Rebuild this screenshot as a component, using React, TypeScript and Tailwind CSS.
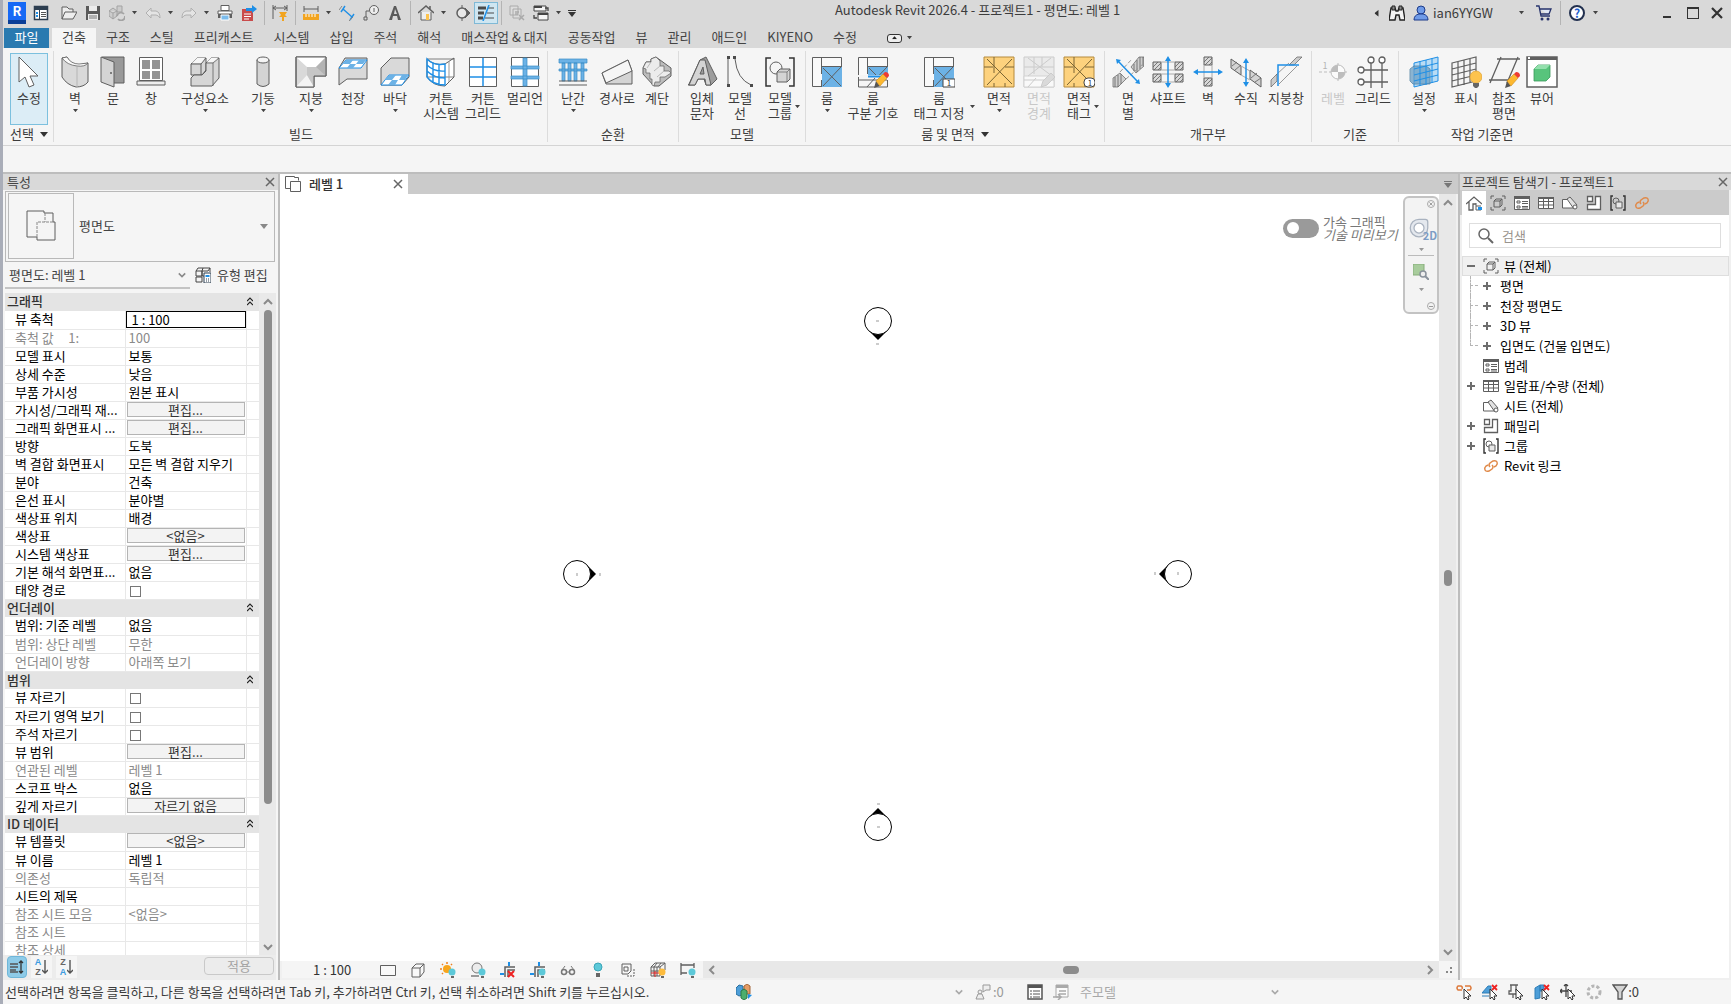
import { useState } from 'react';
import type { ReactNode } from 'react';
import clsx from 'clsx';

const INK = '#5f5f5f';
const BLUE = '#1e8fe6';
const SKY = '#6cb2e6';

// 32px ribbon artwork
const ribbonIcons: Record<string, ReactNode> = {
  modify: (
    <path d="M6 1v25l6-5 4 10 5-2-4-9h8z" fill="#fff" stroke={INK} />
  ),
  wall: (
    <>
      <path d="M3 2v19q5 8 14 10 8 0 12-5V7l-9 2Q11 8 8 1z" fill="#d9d9d9" stroke={INK} />
      <path d="M3 2l5-1q4 7 12 7l9-1q-3 4-11 3Q8 9 3 2z" fill="#fafafa" stroke={INK} strokeWidth=".8" />
      <path d="M18 11v20" stroke="#b5b5b5" />
    </>
  ),
  door: (
    <>
      <path d="M5 1h22v26H15" fill="#999" stroke={INK} />
      <path d="M4 1l13 5v25L4 26z" fill="#d4d4d4" stroke={INK} />
      <circle cx="14" cy="17" r="1" fill={INK} />
    </>
  ),
  window: (
    <>
      <path d="M4.500 1.500h23v23h-23z" fill="#fff" stroke={INK} />
      <path d="M7 4h8v9H7zM17 4h8v9h-8zM7 15h8v8H7zM17 15h8v8h-8z" fill="#949494" />
      <path d="M2 25h28v4H2z" fill="#eee" stroke={INK} />
    </>
  ),
  component: (
    <>
      <path d="M2 8l6-6h9v12l-4 5H2z" fill="#d6d6d6" stroke={INK} />
      <path d="M2 8h10v11M12 8l5-6" fill="none" stroke={INK} />
      <path d="M3 7l5-5h8l-4 5z" fill="#f7f7f7" />
      <path d="M17 7l5-5h8v20l-7 8H2v-8l3-3h8l4-4z" fill="#d6d6d6" stroke={INK} />
      <path d="M17 7h7v23M24 7l6-5" fill="none" stroke={INK} strokeWidth=".8" />
      <path d="M18 6l4-4h7l-5 4z" fill="#f7f7f7" />
    </>
  ),
  column: (
    <>
      <path d="M10 4v24q6 5 12 0V4z" fill="#d4d4d4" stroke={INK} />
      <ellipse cx="16" cy="4" rx="6" ry="3" fill="#f5f5f5" stroke={INK} />
    </>
  ),
  roof: (
    <>
      <path d="M1 1h30v19H19v11H1z" fill="#d9d9d9" stroke={INK} />
      <path d="M1 1h30L21 11l-9 0z" fill="#fff" />
      <path d="M12 11h9l10-10v19z" fill="#b3b3b3" />
      <path d="M1 31l11-12 7 12z" fill="#f4f4f4" />
      <path d="M12 11v8l7 12V20l12 0-10-9z" fill="#c6c6c6" />
      <path d="M1 1h30v19H19v11H1z" fill="none" stroke={INK} />
    </>
  ),
  ceiling: (
    <>
      <path d="M2 12V29l8-6v0h20V2H8z" fill="#d9d9d9" stroke={INK} />
      <path d="M2 12l7-8h21l-6 8z" fill="#fff" stroke={BLUE} />
      <path d="M9 4h7l-3 4H6zM22 4h7l-3 4h-7zM13 8h6l-3 4h-6z" fill={SKY} />
    </>
  ),
  floor: (
    <>
      <path d="M2 12L12 2h18v19l-7 8H2z" fill="#d9d9d9" stroke={INK} />
      <path d="M2 29l8-10h20l-7 10z" fill="#fff" stroke={BLUE} />
      <path d="M10 19h7l-4 5H6zM23 19h6l-3 5h-6zM13 24h6l-3 5H9z" fill={SKY} />
    </>
  ),
  curtainSystem: (
    <>
      <path d="M2 3q7 7 18 5l9-6v19l-9 9Q8 30 2 21z" fill="#fff" stroke={INK} />
      <path d="M2 3h27M2 21h27" stroke={INK} strokeWidth=".8" />
      <path d="M2 3q7 7 18 5v21Q8 29 2 21zM2 9q7 7 18 6M2 15q7 7 18 7M8 7v20M14 8v21" fill="none" stroke={BLUE} strokeWidth="1.400" />
      <path d="M24 5v21" stroke="#999" />
    </>
  ),
  curtainGrid: (
    <>
      <path d="M2.500 1.500h27v29h-27z" fill="#fff" stroke={INK} />
      <path d="M16 2v28M3 11h26M3 21h26" stroke={BLUE} strokeWidth="1.500" />
    </>
  ),
  mullion: (
    <>
      <path d="M2.500 1.500h27v29h-27z" fill="#fff" stroke={INK} />
      <path d="M2 10h28v3H2zM2 20h28v3H2zM14 2h4v28h-4z" fill={SKY} stroke="#3b8cc6" strokeWidth=".7" />
    </>
  ),
  railing: (
    <>
      <path d="M2 3h28v4H2zM2 13h28v2H2zM5 7h3v18H5zM11 7h3v18h-3zM17 7h3v18h-3zM24 7h3v18h-3z" fill={SKY} stroke="#3b8cc6" strokeWidth=".7" />
      <path d="M2 25h28M2 29h28" stroke={INK} />
    </>
  ),
  ramp: (
    <>
      <path d="M1 17L27 4l4 11v13H5z" fill="#d4d4d4" stroke={INK} />
      <path d="M1 17L27 4l4 11L5 27z" fill="#f6f6f6" stroke={INK} />
    </>
  ),
  stair: (
    <>
      <path d="M2 12l3-6h5V3l5-2 15 11v8L18 30h-5L2 18z" fill="#bcbcbc" stroke={INK} />
      <path d="M2 12l3-6h5V3l5-2 4 4v5h4v5h5l2 2-6 4h-5v5h-5l-1 4-2-1v-6H9v-6H5v-4z" fill="#ececec" stroke={INK} strokeWidth=".7" />
      <path d="M10 6l-4 6M19 10l-6 5M23 15l-7 6" stroke="#aaa" strokeWidth=".8" />
    </>
  ),
  modelText: (
    <>
      <path d="M3 28L14 4l6-3 11 22-6 6-5 0-2-6h-6l-3 6H2z" fill="#9d9d9d" stroke={INK} />
      <path d="M3 29L14 4h5l6 25h-5l-1-6h-7l-3 6zM14 18h4l-1-7z" fill="#d4d4d4" stroke={INK} fillRule="evenodd" />
    </>
  ),
  modelLine: (
    <>
      <path d="M4 3v26M11 3q2 20 16 26" fill="none" stroke={INK} />
      <path d="M3 0h3v3H3zM3 28h3v3H3zM9 0h3v3H9zM26 28h3v3h-3z" fill="#4b4b4b" />
    </>
  ),
  modelGroup: (
    <>
      <path d="M7 2H2v28h5M25 2h5v28h-5" fill="none" stroke="#333" strokeWidth="1.500" />
      <circle cx="12" cy="12" r="6" fill="#f5f5f5" stroke={INK} />
      <path d="M13 16l3-3h10v10l-3 3H13z" fill="#d4d4d4" stroke={INK} />
      <path d="M13 16h10v10M23 16l3-3" fill="none" stroke={INK} strokeWidth=".7" />
    </>
  ),
  room: <RoomBase />,
  roomSeparator: (
    <>
      <RoomBase />
      <path d="M0 19h32v12H0z" fill="#f5f5f5" />
      <path d="M1.500 21v10h29v-7M1 24h29M10 31l8-9" fill="none" stroke={INK} />
      <path d="M11 20.500h20" stroke={BLUE} strokeWidth="2" />
      <Pencil />
    </>
  ),
  roomTag: (
    <>
      <RoomBase />
      <path d="M20 23h12v8H20z" fill="#fff" stroke="#444" />
      <text x="26" y="30" textAnchor="middle" fontSize="8" fill="#333">1</text>
    </>
  ),
  area: <AreaBase />,
  areaBoundary: (
    <g opacity=".45">
      <path d="M1 1h30v30H1z" fill="#ddd" stroke="#999" />
      <path d="M1 20h30v11H1z" fill="#fff" stroke="#aaa" />
      <path d="M11 1v17M19 1v10M1 11h30M5 2l24 18M28 2L5 20M5 31l8-9M1 24h30" fill="none" stroke="#999" />
      <path d="M18 31l2-6 8-8 4 4-8 8z" fill="#bbb" stroke="#999" />
    </g>
  ),
  areaTag: (
    <>
      <AreaBase />
      <rect x="21" y="22" width="11" height="9" rx="4" fill="#fff" stroke="#444" />
      <text x="27" y="30" textAnchor="middle" fontSize="8" fill="#333">1</text>
    </>
  ),
  byFace: (
    <>
      <path d="M1 31V22l7-5 6 6-8 8zM19 11l8-10h5v9l-8 7z" fill="#cfcfcf" stroke={INK} strokeWidth=".7" />
      <path d="M3 21v10M6 19v12M9 18v10M22 8v7M25 4v12M28 1v12M31 1v9" stroke={INK} strokeWidth=".8" />
      <path d="M8 16L20 3M14 23L31 8" stroke="#999" strokeDasharray="4 2" />
      <path d="M6 5l20 21" stroke={BLUE} strokeWidth="1.500" />
      <path d="M4 3l5 1-4 4zM28 28l-5-1 4-4z" fill={BLUE} />
    </>
  ),
  shaft: (
    <>
      <HatchBox x={1} y={6} /><HatchBox x={23} y={6} /><HatchBox x={1} y={18} /><HatchBox x={23} y={18} />
      <path d="M9 6h14M9 14h14M9 18h14M9 26h14" stroke="#aaa" />
      <path d="M16 2v28" stroke={BLUE} strokeWidth="1.500" />
      <path d="M13 5l3-5 3 5zM13 27l3 5 3-5z" fill={BLUE} />
    </>
  ),
  wallOpening: (
    <>
      <HatchBox x={12} y={1} /><HatchBox x={12} y={22} />
      <path d="M12 9v13M20 9v13" stroke="#aaa" />
      <path d="M4 16h24" stroke={BLUE} strokeWidth="1.500" />
      <path d="M6 13l-5 3 5 3zM26 13l5 3-5 3z" fill={BLUE} />
    </>
  ),
  vertical: (
    <>
      <path d="M1 3l10 7v9L1 12zM20 14l11 8v9l-11-8z" fill="#d4d4d4" stroke={INK} />
      <path d="M2 10l5-4M5 14l6-5M21 22l6-5M25 26l6-4" stroke={INK} strokeWidth=".8" />
      <path d="M11 10l9 5M11 19l9 5" stroke="#aaa" />
      <path d="M16 5v24" stroke={BLUE} strokeWidth="1.500" />
      <path d="M13 7l3-5 3 5zM13 26l3 5 3-5z" fill={BLUE} />
    </>
  ),
  dormer: (
    <>
      <path d="M1 31v-7l6-6v7zM19 9l8-8h5l-8 8z" fill="#ccc" stroke={INK} strokeWidth=".7" />
      <path d="M9 28L27 10M7 18L19 7" stroke="#999" />
      <path d="M8 30V9h21" fill="none" stroke={BLUE} strokeWidth="1.500" />
    </>
  ),
  level: (
    <g opacity=".6">
      <path d="M2 16h28M21 7v19" stroke="#999" strokeDasharray="3 2" />
      <circle cx="21" cy="16" r="7" fill="#fff" stroke="#999" />
      <path d="M21 9v7h-7a7 7 0 0 1 7-7zM21 23v-7h7a7 7 0 0 1-7 7z" fill="#999" />
      <text x="8" y="13" textAnchor="middle" fontSize="9" fill="#888">1</text>
    </g>
  ),
  grid: (
    <>
      <path d="M14 7v25M25 7v25M7 14h24M7 26h24" stroke={INK} strokeWidth="1.300" />
      <g fill="#fff" stroke={INK} strokeWidth="1.300">
        <circle cx="14" cy="4" r="3" /><circle cx="25" cy="4" r="3" />
        <circle cx="4" cy="14" r="3" /><circle cx="4" cy="26" r="3" />
      </g>
    </>
  ),
  setPlane: (
    <>
      <path d="M6 7l24-6v24L6 31z" fill="#b9dcf5" stroke={BLUE} />
      <path d="M2 13l4-3h12l4 3v15H5l-3-3z" fill="#6a9fc6" stroke="#467a9f" opacity=".75" />
      <path d="M12 5v25M18 4v25M24 2v25M6 13l24-6M6 19l24-6M6 25l24-6" stroke={BLUE} />
    </>
  ),
  showPlane: (
    <>
      <path d="M2 7l24-6v24L2 31zM8 5v25M14 4v25M20 2v25M2 13l24-6M2 19l24-6M2 25l24-6" fill="none" stroke={INK} strokeWidth="1.200" />
      <circle cx="26" cy="21" r="6" fill="#fdc34d" stroke="#e0a030" strokeWidth=".7" />
      <path d="M23 27h6v3l-2 2h-2l-2-2z" fill="#666" />
    </>
  ),
  refPlane: (
    <>
      <path d="M13 1L2 27M30 1L19 27M9 3h24M1 24h22" stroke={INK} strokeWidth="1.300" />
      <Pencil />
    </>
  ),
  viewer: (
    <>
      <path d="M1 1h30v30H1z" fill="#fff" stroke={INK} strokeWidth="1.500" />
      <path d="M1 1h30v3H1z" fill={INK} />
      <path d="M2 1h2v2H2z" fill="#fff" />
      <path d="M8 13l4-4h12v12l-4 4H8z" fill="#58c47c" stroke="#3a9a5a" strokeWidth=".8" />
      <path d="M8 13l4-4h12l-4 4z" fill="#93e0ad" />
    </>
  ),
};

function RoomBase() {
  return (
    <>
      <path d="M1.500 1.500h29v29h-29z" fill="#f9f9f9" stroke={INK} />
      <path d="M11 10h20v21H11z" fill={SKY} />
      <path d="M10.500 2v16M10.500 24v6M11 10.500h20M12 12l18 18M30 11L12 30" fill="none" stroke={INK} />
    </>
  );
}

function AreaBase() {
  return (
    <>
      <path d="M1 1h30v30H1z" fill="#fdd27e" stroke="#b58a3c" />
      <path d="M11 1v16M22 27v4M1 11h9M22 11h9M11 27v4M4 3l25 25M29 3L4 29" fill="none" stroke="#7a6534" />
    </>
  );
}

function Pencil() {
  return (
    <>
      <path d="M17 32l2-7 4 5z" fill="#555" />
      <path d="M19 25l7-7 4 4-7 8z" fill="#fdb82f" stroke="#c98b1d" strokeWidth=".6" />
      <path d="M26 18l2-2q4 0 4 4l-2 2z" fill="#ee3b33" />
    </>
  );
}

function HatchBox({ x, y }: { x: number; y: number }) {
  return (
    <g transform={`translate(${x} ${y})`}>
      <path d="M0 0h8v8H0z" fill="#d9d9d9" stroke={INK} />
      <path d="M0 5l5-5M1 8l7-7M5 8l3-3" stroke={INK} strokeWidth=".8" />
    </g>
  );
}

// 16px artwork shared by the bars, the status line and the browser tree
const icons: Record<string, ReactNode> = {
  recent: <><path d="M1.500 1.500h13v13h-13z" fill="#fff" stroke="#2d3e50" strokeWidth="1.500" /><path d="M1 1h14v4H1z" fill="#2d3e50" /><path d="M3 7h2v2H3zM3 10h2v2H3z" fill={BLUE} /><path d="M6.500 5v10" stroke="#2d3e50" /><path d="M8 7.500h5M8 9.500h5M8 11.500h5" stroke="#555" /></>,
  open: <path d="M1 14V2h5l2 2h4v3M1 14L4 7h12l-4 7z" fill="#eee" stroke={INK} />,
  save: <><path d="M1 1h14v14H1z" fill="#5a5a5a" /><path d="M4 1h8v5H4zM3 9h10v6H3z" fill="#ececec" /><path d="M4 11h8M4 13h8" stroke="#777" /></>,
  sync: <g fill="#ccc" stroke="#a3a3a3"><path d="M0 6l4-3 4 3v5l-4 3-4-3zM8 1h5v6H8zM0 6l4 2 4-2M4 8v6" /><path d="M8 11a4 4 0 0 1 7-2M16 11a4 4 0 0 1-7 3" fill="none" strokeWidth="1.800" /></g>,
  undo: <path d="M1 8l5-5v3h5q4 1 4 7-2-3-4-3H6v3z" fill="#e4e4e4" stroke="#b0b0b0" />,
  redo: <path d="M15 8l-5-5v3H5Q1 7 1 13q2-3 4-3h5v3z" fill="#e4e4e4" stroke="#b0b0b0" />,
  print: <><path d="M4 .500h8v5H4z" fill="#fff" stroke={INK} /><path d="M1 6h14v3H1z" fill="#fff" stroke={INK} /><path d="M1 9h14v4H1z" fill="#5f5f5f" /><path d="M4 10h8v5H4z" fill="#7cbcec" stroke="#fff" /></>,
  exportPdf: <><path d="M1 4h11v12H1z" fill="#c94b4b" /><path d="M3 9h7M3 11.500h7M3 14h5" stroke="#fff" /><path d="M5 5V3h6V0l5 4-5 4V6H5z" fill={BLUE} /></>,
  dimPin: <><path d="M1 0v14M15 0v6M1 3h14M4 1L1 3l3 2M12 1l3 2-3 2" fill="none" stroke={INK} /><path d="M7 7h8l-2 3 2 2h-3v4h-2v-4H7l2-2z" fill="#f2a41f" /></>,
  measure: <><path d="M1 1v6M15 1v6M1 4h14" stroke={INK} /><path d="M0 9h16v6H0z" fill="#f2a41f" /><path d="M3 9v3M6 9v3M9 9v3M12 9v3" stroke="#fff" /></>,
  aligned: <><path d="M4 4l9 8M2 7l4-6M11 15l4-6" stroke={BLUE} strokeWidth="1.400" /><path d="M0 5l3-4M10 16l4-4" stroke="#888" /></>,
  tag: <><circle cx="11" cy="5" r="4.500" fill="#eee" stroke={INK} /><path d="M6 6H3v6M1 12h3v3H1z" fill="none" stroke={INK} /><path d="M11 3v4" stroke={INK} /></>,
  textA: <path d="M2 15L7 1h2l5 14h-3l-1-4H6l-1 4zM7 9h3L8 4z" fill="#5a5a5a" fillRule="evenodd" />,
  house: <><path d="M3 7v8h10V7" fill="#eee" stroke={INK} /><path d="M0 8l8-7 8 7M12 1v4" fill="none" stroke={INK} strokeWidth="1.500" /><path d="M8 9h3v6H8z" fill="#fdc34d" /></>,
  section: <><path d="M8 0v16M11 3l5 5-5 5z" fill={INK} stroke={INK} /><circle cx="8" cy="8" r="5" fill="#e8e8e8" stroke={INK} strokeWidth="1.500" /></>,
  thinLines: <><path d="M0 3h8M0 8h6M0 13h5" stroke="#4a4a4a" strokeWidth="3" /><path d="M10 3h6M9 8h7M7 13h9" stroke="#4a4a4a" /><path d="M11 0L5 16" stroke={BLUE} strokeWidth="1.500" /></>,
  closeHidden: <g fill="#ddd" stroke="#aaa"><path d="M1 1h8v9H1zM4 4h8v9H4z" /><path d="M6 7h4M6 9h3M10 10l5 5M15 10l-5 5" strokeWidth="1.500" /></g>,
  windows: <><path d="M6 1h7v5H1V1h5M5 8h10v7H5z" fill="#f5f5f5" stroke="#444" /><path d="M1 2h8M5 9h10" stroke="#444" strokeWidth="2" /><path d="M12 3h3v3M1 10v3h3" fill="none" stroke="#444" strokeWidth="1.300" /></>,
  binoculars: <><path d="M2 3h4l1 3h2l1-3h4l2 12h-5l-1-5H7l-1 5H0z" fill="#f4f4f4" stroke="#222" strokeWidth="1.400" /><path d="M3 1h3v4H3zM10 1h3v4h-3z" fill="#888" stroke="#222" /></>,
  user: <><circle cx="8" cy="5" r="4" fill="#6f9be8" stroke="#1d3b8a" /><path d="M1 15q0-5 5-6h4q5 1 5 6z" fill="#6f9be8" stroke="#1d3b8a" /></>,
  cart: <><path d="M0 1h3l2 10h9M4 4h11l-2 5H5" fill="#dfe6f5" stroke="#27336b" strokeWidth="1.300" /><circle cx="6" cy="14" r="1.500" fill="#27336b" /><circle cx="12" cy="14" r="1.500" fill="#27336b" /></>,
  rect: <path d="M.5 3.500h15v10H.5z" fill="#f8f8f8" stroke={INK} />,
  cube: <path d="M2 6l4-4h8v8l-4 5H2zM2 6h8v9M10 6l4-4" fill="#f8f8f8" stroke={INK} />,
  sun: <><circle cx="7" cy="7" r="4" fill="#f7a51c" /><path d="M7 0v2M0 7h2M2 2l1 1M12 2l-1 1M2 12l1-1" stroke="#f07f1c" strokeWidth="1.500" /><Bulb /></>,
  ball: <><circle cx="7" cy="6" r="5" fill="#ececec" stroke="#777" /><path d="M1 14h8" stroke="#999" strokeWidth="2" /><Bulb /></>,
  cropX: <><path d="M5 15V5h10M8 15V8h7" fill="none" stroke={INK} strokeWidth="1.500" /><path d="M9 0v4M0 12h4" stroke={BLUE} strokeWidth="2" /><path d="M8 9l6 6M14 9l-6 6" stroke="#e22" strokeWidth="2" /></>,
  cropShow: <><path d="M5 15V5h10M8 15V8h7" fill="none" stroke={INK} strokeWidth="1.500" /><path d="M9 0v4M0 12h4" stroke={BLUE} strokeWidth="2" /><Bulb /></>,
  glasses: <><circle cx="4" cy="10" r="2.500" fill="none" stroke="#777" strokeWidth="1.500" /><circle cx="12" cy="10" r="2.500" fill="none" stroke="#777" strokeWidth="1.500" /><path d="M2 8l3-4M14 8l-3-4M7 10h2" stroke="#777" /></>,
  bulb: <><circle cx="8" cy="5" r="4" fill="#5cc8d8" stroke="#3aa5b8" /><path d="M6 11h4v4H6z" fill="#666" /></>,
  displace: <><path d="M2 2h9v7L8 12H2zM4 5h4v4H4z" fill="none" stroke={INK} /><path d="M7 14h7V6" fill="none" stroke={INK} strokeDasharray="2 1" /></>,
  analytic: <><path d="M1 5l4-4h10v7M1 5h9v9H1zM4 5v9M7 5v9M1 9h9M10 5l5-4M7 1L4 5M11 1L8 5" fill="none" stroke={INK} /><path d="M1 11h9M5 9v6" stroke="#d22" /><Bulb fill="#fdbb3c" /></>,
  constraints: <><path d="M1 1v12M14 1v5M1 3h13M1 11h6" fill="none" stroke={INK} strokeWidth="1.300" /><Bulb /></>,
  worksets: <><path d="M0 4l3-3 4 1v9l-4 1-3-2z" fill="#4d9ed8" stroke="#2b6f9f" /><path d="M8 2l3-2 3 2v8H8z" fill="#e59c66" stroke="#a4673a" /><path d="M5 7l3-2 3 2v7l-3 2-3-2z" fill="#4cae6c" stroke="#2a7a45" /><path d="M12 10l4 1-4 4z" fill={BLUE} /></>,
  editable: <g fill="#eee" stroke="#999"><circle cx="5" cy="8" r="2" /><path d="M3 10h4l2 5H1zM8 1h7v5h-4l-3 2z" /></g>,
  list: <><path d="M1 1h14v14H1z" fill="#fff" stroke="#555" strokeWidth="1.500" /><path d="M1 1h14v3H1z" fill="#555" /><path d="M3 7h2M6 7h7M3 10h2M6 10h7M3 13h2M6 13h7" stroke="#555" /></>,
  listOut: <g opacity=".6"><path d="M3 1h12v12H3z" fill="#fff" stroke="#777" /><path d="M3 1h12v3H3z" fill="#777" /><path d="M6 7h7M6 10h7M0 13h7M5 10l3 3-3 3" stroke="#777" fill="none" strokeWidth="1.500" /></g>,
  pickLink: <><path d="M6 6H2q-2-2 0-4h3q2 1 1 3M9 2h5q2 2 0 4h-3" fill="none" stroke="#dd7a3c" strokeWidth="1.500" /><Arrow /></>,
  pickUnderlay: <><path d="M0 9l6-7h3v7zM0 12h7" fill="#4d9ed8" stroke="#2f7fb8" /><path d="M10 1l5 5M15 1l-5 5" stroke="#e22" strokeWidth="1.800" /><Arrow /></>,
  pickPin: <><path d="M2 1h8M3 1v6H1v3h8V7H8V1M5 10v4" fill="none" stroke={INK} strokeWidth="1.300" /><Arrow /></>,
  pickFace: <><path d="M1 4l5-3v13l-5 1zM6 1h4v6H6z" fill="#4d9ed8" stroke="#2f7fb8" /><path d="M10 1l5 5M15 1l-5 5" stroke="#e22" strokeWidth="1.800" /><Arrow /></>,
  pickDrag: <><path d="M0 7h12M6 0v13M2 5L0 7l2 2M4 2l2-2 2 2" fill="none" stroke="#444" strokeWidth="1.300" /><Arrow /></>,
  progress: <circle cx="8" cy="8" r="6" fill="none" stroke="#b5b5b5" strokeWidth="3" strokeDasharray="3 2" />,
  filter: <path d="M1 1h14l-5 7v7H6V8z" fill="#d4d4d4" stroke="#555" strokeWidth="1.300" />,
  homeTree: <><path d="M0 9l8-7 8 7M3 7v8h4V9h3" fill="none" stroke={INK} strokeWidth="1.300" /><path d="M10 8v7h5M10 11h5" stroke={INK} fill="none" /><path d="M12 12h4v3h-4z" fill={BLUE} /></>,
  view: <><path d="M4 1H1v3M12 1h3v3M4 15H1v-3M12 15h3v-3M4 6l2-2h6v6l-2 2H4zM4 6h6v6M10 6l2-2" fill="none" stroke={INK} /></>,
  legend: <><path d="M.5 1.500h15v13H.5z" fill="#fff" stroke={INK} /><path d="M0 1h16v3H0z" fill={INK} /><path d="M3 6h3v2H3zM3 11h3v2H3z" fill="none" stroke={INK} /><path d="M8 6.500h6M8 8.500h6M8 11.500h6M8 13h6" stroke={INK} /></>,
  schedule: <><path d="M.5 2.500h15v11H.5zM.5 6.500h15M.5 10h15M5.500 3v11M10.500 3v11" fill="#fff" stroke={INK} /><path d="M0 2h16v2H0z" fill={INK} /></>,
  sheet: <><path d="M.5 13V4.500h6l8 8V13z" fill="#fff" stroke={INK} /><path d="M5 4l3-2 7 8-3 4z" fill="#e2e2e2" stroke={INK} /><circle cx="13" cy="12" r="2" fill="#fff" stroke={INK} /></>,
  family: <path d="M1.500 1.500h5v5h-5zM9.500 1.500h5v13h-13v-5h8z" fill="#fff" stroke={INK} strokeWidth="1.300" />,
  plan: <><path d="M5 12.500H.5v-12h9v1h4v3" fill="#fff" stroke={INK} /><path d="M5.500 15.500v-10h10v10z" fill="#fff" stroke={INK} /></>,
  group: <><path d="M3 1H1v14h2M13 1h2v14h-2" fill="none" stroke="#333" strokeWidth="1.400" /><circle cx="6" cy="6" r="3" fill="none" stroke={INK} /><path d="M6 7h6v6H6z" fill="#e8e8e8" stroke={INK} /></>,
  link: <g fill="none" stroke="#e08a4a" strokeWidth="1.500"><path d="M7 9q-2-2 0-4l3-2q3-1 4 1 1 2-1 4l-2 1" /><path d="M9 7q2 2 0 4l-3 2q-3 1-4-1-1-2 1-4l2-1" /></g>,
  search: <><circle cx="6" cy="6" r="5" fill="none" stroke="#666" strokeWidth="1.500" /><path d="M10 10l5 5" stroke="#666" strokeWidth="2" /></>,
  typeEdit: <><path d="M1 4l2-3h12v4M1 4h6v5H1zM1 10h6v5H1zM8 1L7 4v5h3M7 4h6l2-3" fill="none" stroke="#444" /><path d="M9 6h7v10H9z" fill="#fff" stroke="#2d3e50" /><path d="M10.500 8h4v2h-4z" fill={BLUE} /><path d="M11 12h1M13 12h1M11 14h1M13 14h1" stroke="#2d3e50" /></>,
  sortGroup: <><path d="M1 5h8M1 8h8M1 11h6M1 13h8" stroke="#555" strokeWidth="1.300" /><path d="M12 2v12M10 4l2-2 2 2M10 12l2 2 2-2" stroke="#333" fill="none" strokeWidth="1.300" /></>,
  wheel: <><path d="M8 1h5q2 0 2 2v5a7 7 0 1 1-7-7z" fill="#e4e8ee" stroke="#a9b2bf" /><circle cx="8" cy="8" r="4" fill="#fff" stroke="#a9b2bf" /></>,
  zoomRegion: <><path d="M0 0h11v11H0z" fill="#a8cc9c" stroke="#86ad7a" /><circle cx="10" cy="10" r="3" fill="#eee" stroke="#8a929c" strokeWidth="1.500" /><path d="M12 12l4 4" stroke="#8a929c" strokeWidth="2" /></>,
};

function Bulb({ fill = '#5cc8d8' }: { fill?: string }) {
  return (
    <>
      <circle cx="12" cy="10" r="3.500" fill={fill} />
      <path d="M11 14h3v2h-3z" fill="#666" />
    </>
  );
}

function Arrow() {
  return <path d="M8 5v10l2-2 2 3 1-1-1-3h3z" fill="#fff" stroke="#333" />;
}

function Icon({ name, className = 'size-4' }: { name: string; className?: string }) {
  return (
    <svg viewBox="0 0 16 16" fill="none" className={clsx('shrink-0', className)} aria-hidden="true">
      {icons[name]}
    </svg>
  );
}

function Caret({ className = 'w-[6px] text-[#444]' }: { className?: string }) {
  return (
    <svg viewBox="0 0 8 5" className={clsx('shrink-0', className)} aria-hidden="true">
      <path d="M0 0h8L4 5z" fill="currentColor" />
    </svg>
  );
}

function Chevron({ className = 'size-[10px]' }: { className?: string }) {
  return (
    <svg viewBox="0 0 10 10" fill="none" className={clsx('shrink-0', className)} aria-hidden="true">
      <path d="M1 3l4 4 4-4" stroke="#8a8a8a" strokeWidth="2" />
    </svg>
  );
}

function CloseMark({ className = 'size-[10px]' }: { className?: string }) {
  return (
    <svg viewBox="0 0 10 10" fill="none" className={className} aria-hidden="true">
      <path d="M1 1l8 8M9 1L1 9" stroke="#666" strokeWidth="1.500" />
    </svg>
  );
}

interface RibbonTool {
  icon: string;
  lines: string[];
  width: string;
  caret?: 'below' | 'side';
  disabled?: boolean;
}

interface RibbonGroup {
  title: string;
  expandable?: boolean;
  padding: string;
  tools: RibbonTool[];
}

const ribbonGroups: RibbonGroup[] = [
  {
    title: '빌드',
    padding: 'pl-px',
    tools: [
      { icon: 'wall', lines: ['벽'], width: 'w-10', caret: 'below' },
      { icon: 'door', lines: ['문'], width: 'w-9' },
      { icon: 'window', lines: ['창'], width: 'w-10' },
      { icon: 'component', lines: ['구성요소'], width: 'w-[68px]', caret: 'below' },
      { icon: 'column', lines: ['기둥'], width: 'w-12', caret: 'below' },
      { icon: 'roof', lines: ['지붕'], width: 'w-12', caret: 'below' },
      { icon: 'ceiling', lines: ['천장'], width: 'w-9' },
      { icon: 'floor', lines: ['바닥'], width: 'w-12', caret: 'below' },
      { icon: 'curtainSystem', lines: ['커튼', '시스템'], width: 'w-11' },
      { icon: 'curtainGrid', lines: ['커튼', '그리드'], width: 'w-10' },
      { icon: 'mullion', lines: ['멀리언'], width: 'w-11' },
    ],
  },
  {
    title: '순환',
    padding: 'px-[3px]',
    tools: [
      { icon: 'railing', lines: ['난간'], width: 'w-11', caret: 'below' },
      { icon: 'ramp', lines: ['경사로'], width: 'w-11' },
      { icon: 'stair', lines: ['계단'], width: 'w-9' },
    ],
  },
  {
    title: '모델',
    padding: 'px-[3px]',
    tools: [
      { icon: 'modelText', lines: ['입체', '문자'], width: 'w-10' },
      { icon: 'modelLine', lines: ['모델', '선'], width: 'w-9' },
      { icon: 'modelGroup', lines: ['모델', '그룹'], width: 'w-11', caret: 'side' },
    ],
  },
  {
    title: '룸 및 면적',
    expandable: true,
    padding: 'px-[3px]',
    tools: [
      { icon: 'room', lines: ['룸'], width: 'w-9', caret: 'below' },
      { icon: 'roomSeparator', lines: ['룸', '구분 기호'], width: 'w-14' },
      { icon: 'roomTag', lines: ['룸', '태그 지정'], width: 'w-[76px]', caret: 'side' },
      { icon: 'area', lines: ['면적'], width: 'w-11', caret: 'below' },
      { icon: 'areaBoundary', lines: ['면적', '경계'], width: 'w-9', disabled: true },
      { icon: 'areaTag', lines: ['면적', '태그'], width: 'w-11', caret: 'side' },
    ],
  },
  {
    title: '개구부',
    padding: 'px-[3px]',
    tools: [
      { icon: 'byFace', lines: ['면', '별'], width: 'w-10' },
      { icon: 'shaft', lines: ['샤프트'], width: 'w-10' },
      { icon: 'wallOpening', lines: ['벽'], width: 'w-10' },
      { icon: 'vertical', lines: ['수직'], width: 'w-9' },
      { icon: 'dormer', lines: ['지붕창'], width: 'w-11' },
    ],
  },
  {
    title: '기준',
    padding: 'px-[3px]',
    tools: [
      { icon: 'level', lines: ['레벨'], width: 'w-9', disabled: true },
      { icon: 'grid', lines: ['그리드'], width: 'w-11' },
    ],
  },
  {
    title: '작업 기준면',
    padding: 'px-[3px]',
    tools: [
      { icon: 'setPlane', lines: ['설정'], width: 'w-11', caret: 'below' },
      { icon: 'showPlane', lines: ['표시'], width: 'w-10' },
      { icon: 'refPlane', lines: ['참조', '평면'], width: 'w-9' },
      { icon: 'viewer', lines: ['뷰어'], width: 'w-10' },
    ],
  },
];

const ribbonTabs = [
  '건축', '구조', '스틸', '프리캐스트', '시스템', '삽입', '주석', '해석',
  '매스작업 & 대지', '공동작업', '뷰', '관리', '애드인', 'KIYENO', '수정',
];

type PropertyKind = 'text' | 'input' | 'button' | 'check';

interface PropertyRow {
  name: string;
  value?: string;
  kind?: PropertyKind;
  muted?: boolean;
}

const propertySections: { title: string; rows: PropertyRow[] }[] = [
  {
    title: '그래픽',
    rows: [
      { name: '뷰 축척', value: '1 : 100', kind: 'input' },
      { name: '축척 값     1:', value: '100', muted: true },
      { name: '모델 표시', value: '보통' },
      { name: '상세 수준', value: '낮음' },
      { name: '부품 가시성', value: '원본 표시' },
      { name: '가시성/그래픽 재...', value: '편집...', kind: 'button' },
      { name: '그래픽 화면표시 ...', value: '편집...', kind: 'button' },
      { name: '방향', value: '도북' },
      { name: '벽 결합 화면표시', value: '모든 벽 결합 지우기' },
      { name: '분야', value: '건축' },
      { name: '은선 표시', value: '분야별' },
      { name: '색상표 위치', value: '배경' },
      { name: '색상표', value: '<없음>', kind: 'button' },
      { name: '시스템 색상표', value: '편집...', kind: 'button' },
      { name: '기본 해석 화면표...', value: '없음' },
      { name: '태양 경로', kind: 'check' },
    ],
  },
  {
    title: '언더레이',
    rows: [
      { name: '범위: 기준 레벨', value: '없음' },
      { name: '범위: 상단 레벨', value: '무한', muted: true },
      { name: '언더레이 방향', value: '아래쪽 보기', muted: true },
    ],
  },
  {
    title: '범위',
    rows: [
      { name: '뷰 자르기', kind: 'check' },
      { name: '자르기 영역 보기', kind: 'check' },
      { name: '주석 자르기', kind: 'check' },
      { name: '뷰 범위', value: '편집...', kind: 'button' },
      { name: '연관된 레벨', value: '레벨 1', muted: true },
      { name: '스코프 박스', value: '없음' },
      { name: '깊게 자르기', value: '자르기 없음', kind: 'button' },
    ],
  },
  {
    title: 'ID 데이터',
    rows: [
      { name: '뷰 템플릿', value: '<없음>', kind: 'button' },
      { name: '뷰 이름', value: '레벨 1' },
      { name: '의존성', value: '독립적', muted: true },
      { name: '시트의 제목' },
      { name: '참조 시트 모음', value: '<없음>', muted: true },
      { name: '참조 시트', muted: true },
      { name: '참조 상세', muted: true },
    ],
  },
];

function QuickButton({ icon, caret, active }: { icon: string; caret?: boolean; active?: boolean }) {
  return (
    <button type="button" aria-label={icon} className={clsx('flex h-[22px] items-center', active ? 'w-6 justify-center border border-[#7fb9d6] bg-[#cfe6f1]' : 'px-1')}>
      <Icon name={icon} />
      {caret && <Caret className="ml-[7px] w-[5px] text-[#444]" />}
    </button>
  );
}

function BarDivider({ className = 'mx-[3px]' }: { className?: string }) {
  return <span className={clsx('h-6 w-px bg-[#b4b4b4]', className)} />;
}

function TitleBar() {
  return (
    <header className="relative flex h-7 items-start bg-[#d9d9d9] pt-px text-[#3c3c3c]">
      <div className="flex items-center pl-[5px]">
        <button type="button" aria-label="Revit" className="mr-[3px] flex h-[22px] w-[18px] items-start justify-center border-b-4 border-[#0b3f97] bg-[#1769f5] text-[13px] leading-[17px] font-bold text-white">
          R
        </button>
        <QuickButton icon="recent" />
        <span className="w-1" />
        <QuickButton icon="open" />
        <QuickButton icon="save" />
        <QuickButton icon="sync" caret />
        <QuickButton icon="undo" caret />
        <QuickButton icon="redo" caret />
        <QuickButton icon="print" />
        <QuickButton icon="exportPdf" />
        <BarDivider />
        <QuickButton icon="dimPin" />
        <BarDivider />
        <QuickButton icon="measure" caret />
        <QuickButton icon="aligned" />
        <QuickButton icon="tag" />
        <QuickButton icon="textA" />
        <BarDivider />
        <QuickButton icon="house" caret />
        <QuickButton icon="section" />
        <QuickButton icon="thinLines" active />
        <BarDivider />
        <QuickButton icon="closeHidden" />
        <QuickButton icon="windows" caret />
        <button type="button" aria-label="신속 접근 사용자화" className="ml-[3px] flex flex-col items-center gap-px">
          <span className="h-px w-2 bg-[#333]" />
          <Caret className="w-2 text-[#333]" />
        </button>
      </div>
      <h1 className="absolute top-0 left-[832px] text-[13px] leading-5">Autodesk Revit 2026.4 - 프로젝트1 - 평면도: 레벨 1</h1>
      <div className="ml-auto flex h-6 items-center pr-2">
        <button type="button" aria-label="검색 접기" className="mr-[9px]">
          <Caret className="w-[7px] rotate-90 text-[#333]" />
        </button>
        <Icon name="binoculars" className="mr-2 size-4" />
        <button type="button" className="flex items-center text-[13px]">
          <Icon name="user" className="mr-1 size-4" />
          <span className="w-[86px] text-left">ian6YYGW</span>
          <Caret className="w-[5px] text-[#444]" />
        </button>
        <button type="button" aria-label="앱 스토어" className="ml-3">
          <Icon name="cart" />
        </button>
        <BarDivider className="mx-2" />
        <button type="button" aria-label="도움말" className="flex items-center gap-2">
          <span className="flex size-4 items-center justify-center rounded-full border-2 border-[#22304f] bg-white text-[12px] leading-3 font-bold text-[#2361d0]">?</span>
          <Caret className="w-[5px] text-[#444]" />
        </button>
        <button type="button" aria-label="최소화" className="ml-[65px] flex size-3 items-end pb-px">
          <span className="h-[2px] w-2 bg-[#333]" />
        </button>
        <button type="button" aria-label="최대화" className="ml-3 size-3 border border-t-2 border-[#333]" />
        <button type="button" aria-label="닫기" className="ml-3">
          <svg viewBox="0 0 12 12" className="size-3"><path d="M1 1l10 10M11 1L1 11" stroke="#333" strokeWidth="2.200" /></svg>
        </button>
      </div>
    </header>
  );
}

function RibbonTabs() {
  const [active, setActive] = useState('건축');
  return (
    <nav className="flex h-5 items-stretch bg-[#d9d9d9] pl-px text-[13px] leading-[18px] text-[#444]">
      <button type="button" className="mr-[3px] w-[45px] bg-[#2a7ab0] pb-[2px] text-white">파일</button>
      {ribbonTabs.map((tab) => (
        <button
          key={tab}
          type="button"
          onClick={() => setActive(tab)}
          className={clsx('px-[10px] pb-[2px] whitespace-nowrap', tab === active && 'bg-[#f5f5f5]')}
        >
          {tab}
        </button>
      ))}
      <button type="button" aria-label="리본 최소화" className="ml-5 flex items-center gap-[5px]">
        <span className="flex h-[9px] w-[15px] items-center justify-center rounded-[3px] border border-[#333] bg-[#eee]">
          <Caret className="w-[5px] rotate-180 text-[#222]" />
        </span>
        <Caret className="w-[5px] text-[#444]" />
      </button>
    </nav>
  );
}

function ToolButton({ tool }: { tool: RibbonTool }) {
  return (
    <button
      type="button"
      disabled={tool.disabled}
      className={clsx('relative flex flex-col items-center pt-2 text-[13px] leading-[15px] whitespace-nowrap', tool.width, tool.disabled && 'text-[#c8c8c8]')}
    >
      <svg viewBox="0 0 32 32" fill="none" className="mb-[2px] size-8" aria-hidden="true">
        {ribbonIcons[tool.icon]}
      </svg>
      {tool.lines.map((line) => (
        <span key={line}>{line}</span>
      ))}
      {tool.caret === 'below' && <Caret className="mt-1 w-[5px] text-[#444]" />}
      {tool.caret === 'side' && <Caret className="absolute right-[2px] bottom-3 w-[5px] text-[#444]" />}
    </button>
  );
}

function Ribbon() {
  return (
    <section className="flex h-[98px] shrink-0 border-b border-[#d4d4d4] bg-[#f5f5f5] text-[#3c3c3c]">
      <div className="my-[3px] flex w-[51px] flex-col items-center border-r border-[#dcdcdc] pl-[2px]">
        <button type="button" className="mt-[2px] flex h-[72px] w-[38px] flex-col items-center gap-[2px] border border-[#7cc0de] bg-[#dcedf6] pt-[2px] text-[13px] leading-[15px]">
          <svg viewBox="0 0 32 32" fill="none" className="size-8" aria-hidden="true">{ribbonIcons.modify}</svg>
          수정
        </button>
        <button type="button" className="mt-px flex items-center gap-[6px] text-[13px] leading-4">
          선택 <Caret className="w-2 text-[#333]" />
        </button>
      </div>
      {ribbonGroups.map((group, i) => (
        <div
          key={group.title}
          className={clsx('my-[3px] flex flex-col', group.padding, i < ribbonGroups.length - 1 && 'border-r border-[#dcdcdc]')}
        >
          <div className="-mt-[3px] flex h-[78px] items-start">
            {group.tools.map((tool) => (
              <ToolButton key={tool.icon} tool={tool} />
            ))}
          </div>
          <div className="flex items-center justify-center gap-[6px] text-[13px] leading-4">
            {group.title}
            {group.expandable && <Caret className="w-2 text-[#333]" />}
          </div>
        </div>
      ))}
    </section>
  );
}

function PropertyValue({ row }: { row: PropertyRow }) {
  if (row.kind === 'input') {
    return (
      <input
        aria-label={row.name}
        defaultValue={row.value}
        className="block h-[17px] w-full border border-black bg-white px-[5px] text-[13px] leading-4 text-black outline-none"
      />
    );
  }
  if (row.kind === 'button') {
    return (
      <button type="button" aria-label={`${row.name} ${row.value}`} className="mx-px block h-[15px] w-[118px] border border-[#b4b4b4] bg-[#f3f3f3] text-[13px] leading-[13px] text-[#333]">
        {row.value}
      </button>
    );
  }
  if (row.kind === 'check') {
    return (
      <input type="checkbox" aria-label={row.name} className="mt-1 ml-1 block size-[11px] appearance-none border border-[#777] bg-white checked:bg-[#777]" />
    );
  }
  return <span className="block pl-[3px] whitespace-nowrap">{row.value}</span>;
}

function PropertiesTable() {
  return (
    <table className="w-full table-fixed border-collapse bg-white text-left text-[13px] leading-4">
      <colgroup>
        <col className="w-[120px]" />
        <col className="w-[121px]" />
        <col />
      </colgroup>
      {propertySections.map((section) => (
        <tbody key={section.title}>
          <tr className="h-[18px] bg-[#e4e4e4]">
            <th colSpan={3} className="p-0 align-top font-medium text-[#333]">
              <button type="button" className="flex h-4 w-full items-center justify-between pr-[6px] pl-[2px]">
                {section.title}
                <svg viewBox="0 0 6 9" fill="none" className="h-[9px] w-[6px]" aria-hidden="true">
                  <path d="M0 4l3-3 3 3M0 8l3-3 3 3" stroke="#222" strokeWidth="1.200" />
                </svg>
              </button>
            </th>
          </tr>
          {section.rows.map((row) => (
            <tr key={row.name} className={clsx('h-[18px] border-b border-[#e8e8e8] align-top', row.muted ? 'text-[#8a8a8a]' : 'text-black')}>
              <th className="h-[18px] p-0 pl-[10px] font-normal whitespace-pre">{row.name}</th>
              <td className="h-[18px] border-x border-[#e8e8e8] p-0">
                <PropertyValue row={row} />
              </td>
              <td className="p-0" />
            </tr>
          ))}
        </tbody>
      ))}
    </table>
  );
}

function PropertiesPanel() {
  return (
    <aside className="flex w-[277px] shrink-0 flex-col border-r-2 border-[#bdbdbd] bg-[#f5f5f5] pr-[2px] pl-[2px]">
      <div className="-mx-[2px] flex h-4 shrink-0 items-center justify-between bg-[#d9d9d9] pr-[3px] pl-1 text-[13px] leading-4 text-[#444]">
        <h2>특성</h2>
        <button type="button" aria-label="특성 닫기"><CloseMark /></button>
      </div>
      <button type="button" className="mt-px flex h-[71px] w-[270px] shrink-0 items-center border border-[#b9b9b9] px-[2px] pb-px text-[13px] text-[#444]">
        <span className="mr-[5px] flex size-[66px] shrink-0 items-center justify-center border border-[#b9b9b9]">
          <svg viewBox="0 0 32 32" fill="none" className="size-8" aria-hidden="true">
            <path d="M12 27H2V1h17v2h9v9" stroke={INK} />
            <path d="M28 12h2v18H12v-3" stroke={INK} />
            <path d="M20 3v9M28 12H12v15" stroke="#888" strokeDasharray="3 1" />
          </svg>
        </span>
        평면도
        <Caret className="mr-1 ml-auto w-2 text-[#888]" />
      </button>
      <div className="flex h-[27px] shrink-0 items-stretch text-[13px] text-[#444]">
        <button type="button" className="flex w-[185px] items-center justify-between border-b-2 border-[#c4c4c4] px-1">
          평면도: 레벨 1
          <Chevron className="size-2" />
        </button>
        <button type="button" className="ml-[5px] flex items-center gap-[6px] pb-[2px]">
          <Icon name="typeEdit" />
          유형 편집
        </button>
      </div>
      <div className="mt-1 flex min-h-0 flex-1">
        <div className="w-[254px] overflow-hidden">
          <PropertiesTable />
        </div>
        <div className="flex flex-1 flex-col items-center bg-[#e9e9e9]">
          <Chevron className="mt-1 mb-[3px] size-[10px] rotate-180" />
          <div className="h-[494px] w-2 rounded-full bg-[#8c8c8c]" />
          <Chevron className="mt-auto mb-[3px] size-[10px]" />
        </div>
      </div>
      <div className="-ml-[2px] flex h-[25px] shrink-0 items-start gap-1 bg-[#ececec] pt-px pr-[2px] pl-1">
        <button type="button" aria-label="그룹별 정렬" className="flex h-[22px] w-5 items-center justify-center rounded-sm border border-[#6fb6d8] bg-[#8ecbe8]">
          <Icon name="sortGroup" />
        </button>
        <SortButton top="A" bottom="Z" />
        <SortButton top="Z" bottom="A" />
        <button type="button" disabled className="mt-px ml-auto h-[18px] w-[70px] rounded-sm border border-[#c9c9c9] text-[13px] leading-4 text-[#a3a3a3]">
          적용
        </button>
      </div>
    </aside>
  );
}

function SortButton({ top, bottom }: { top: string; bottom: string }) {
  return (
    <button type="button" aria-label={`${top}-${bottom} 정렬`} className="flex h-[22px] w-[21px] items-center justify-center gap-px bg-[#f5f5f5]">
      <span className="flex flex-col font-['Liberation_Sans',sans-serif] text-[9px] leading-[10px] font-bold">
        <span className={top === 'A' ? 'text-[#3b9be0]' : 'text-[#666]'}>{top}</span>
        <span className={bottom === 'A' ? 'text-[#3b9be0]' : 'text-[#666]'}>{bottom}</span>
      </span>
      <svg viewBox="0 0 6 14" fill="none" className="h-[14px] w-[6px]" aria-hidden="true">
        <path d="M3 0v13M0 10l3 3 3-3" stroke="#555" strokeWidth="1.400" />
      </svg>
    </button>
  );
}

// elevation symbols, keyed by the side of the plan they stand on
const elevationMarks = [
  { id: 'north', place: 'left-[578px] top-[107px]', turn: 'rotate-0' },
  { id: 'west', place: 'left-[277px] top-[360px]', turn: '-rotate-90' },
  { id: 'east', place: 'left-[878px] top-[360px]', turn: 'rotate-90' },
  { id: 'south', place: 'left-[578px] top-[613px]', turn: 'rotate-180' },
];

function ElevationMark({ place, turn }: { place: string; turn: string }) {
  return (
    <div className={clsx('absolute size-10', place)}>
      <svg viewBox="0 0 54 54" fill="none" className={clsx('-m-[7px] size-[54px] max-w-none', turn)} aria-hidden="true">
        <path d="M17 36l10 10 10-10z" fill="#000" />
        <circle cx="27" cy="27" r="13.500" fill="#fff" stroke="#000" />
        <path d="M25 27h3M25 50h3" stroke="#999" />
      </svg>
    </div>
  );
}

function NavigationBar() {
  return (
    <div className="absolute top-[2px] right-0 flex h-[118px] w-9 flex-col items-center rounded-md border-2 border-[#c3c3c3] bg-[#f3f3f3]">
      <button type="button" aria-label="탐색 막대 닫기" className="mt-[2px] mr-[2px] flex size-2 items-center justify-center self-end rounded-full border border-[#aaa]">
        <CloseMark className="size-1" />
      </button>
      <button type="button" aria-label="2D 휠" className="relative mt-2 size-6">
        <Icon name="wheel" className="size-5" />
        <span className="absolute -right-1 -bottom-px text-[11px] leading-3 font-bold text-[#7c9cc4]">2D</span>
      </button>
      <Caret className="mt-2 w-[5px] text-[#999]" />
      <span className="mt-1 h-px w-[26px] bg-[#bbb]" />
      <button type="button" aria-label="영역 확대" className="mt-2">
        <Icon name="zoomRegion" />
      </button>
      <Caret className="mt-2 w-[5px] text-[#999]" />
      <span className="mt-auto mr-[2px] mb-[2px] flex size-2 items-center justify-center self-end rounded-full border border-[#aaa]">
        <span className="h-px w-1 bg-[#999]" />
      </span>
    </div>
  );
}

const viewControls = ['rect', 'cube', 'sun', 'ball', 'cropX', 'cropShow', 'glasses', 'bulb', 'displace', 'analytic', 'constraints'];

function DrawingArea() {
  return (
    <main className="flex min-w-0 flex-1 flex-col bg-[#f0f0f0]">
      <div className="flex h-5 shrink-0 items-stretch bg-[#cbcbcb]">
        <div className="flex w-32 items-center bg-white px-[5px] text-[13px] text-[#333]">
          <Icon name="plan" className="mr-2 size-4" />
          <span className="font-medium">레벨 1</span>
          <button type="button" aria-label="레벨 1 닫기" className="ml-auto"><CloseMark /></button>
        </div>
        <button type="button" aria-label="탭 목록" className="mr-[6px] ml-auto flex flex-col items-center justify-center gap-px">
          <span className="h-px w-2 bg-[#777]" />
          <Caret className="w-2 text-[#777]" />
        </button>
      </div>
      <div className="flex min-h-0 flex-1">
        <div className="relative min-w-0 flex-1 overflow-hidden bg-white">
          {elevationMarks.map((mark) => (
            <ElevationMark key={mark.id} place={mark.place} turn={mark.turn} />
          ))}
          <label className="absolute top-[21px] right-9 flex items-center text-[13px] leading-[13px] text-[#777]">
            <span className="relative mr-1 flex h-[19px] w-9 items-center rounded-full bg-[#9a9a9a] px-1">
              <input type="checkbox" aria-label="가속 그래픽" className="size-3 appearance-none rounded-full bg-white checked:ml-auto" />
            </span>
            <span className="flex w-20 flex-col whitespace-nowrap">
              <span>가속 그래픽</span>
              <span className="italic">기술 미리보기</span>
            </span>
          </label>
          <NavigationBar />
        </div>
        <div className="mr-[2px] flex w-[17px] shrink-0 flex-col items-center justify-between bg-[#e8e8e8] py-1">
          <Chevron className="size-[10px] rotate-180" />
          <div className="h-4 w-2 rounded-sm bg-[#8c8c8c]" />
          <Chevron />
        </div>
      </div>
      <div className="mb-[2px] ml-[2px] flex h-[17px] shrink-0 items-center bg-[#f5f5f5]">
        <button type="button" className="w-[91px] pl-[31px] text-left text-[13px] leading-4 text-[#333]">1 : 100</button>
        {viewControls.map((name) => (
          <button key={name} type="button" aria-label={name} className="flex w-[30px] justify-center">
            <Icon name={name} />
          </button>
        ))}
        <div className="flex h-full flex-1 items-center justify-between bg-[#e8e8e8] px-1">
          <Chevron className="size-[10px] rotate-90" />
          <div className="h-2 w-4 rounded-sm bg-[#8c8c8c]" />
          <Chevron className="size-[10px] -rotate-90" />
        </div>
        <div className="mr-[2px] flex w-[17px] justify-end pr-1">
          <svg viewBox="0 0 6 6" className="size-[6px]" aria-hidden="true">
            <path d="M4 0h2v2H4zM0 4h2v2H0zM4 4h2v2H4z" fill="#888" />
          </svg>
        </div>
      </div>
    </main>
  );
}

const browserTabs = ['homeTree', 'view', 'legend', 'schedule', 'sheet', 'family', 'group', 'link'];

const viewChildren = ['평면', '천장 평면도', '3D 뷰', '입면도 (건물 입면도)'];

const browserRoots = [
  { icon: 'legend', label: '범례', expandable: false },
  { icon: 'schedule', label: '일람표/수량 (전체)', expandable: true },
  { icon: 'sheet', label: '시트 (전체)', expandable: false },
  { icon: 'family', label: '패밀리', expandable: true },
  { icon: 'group', label: '그룹', expandable: true },
  { icon: 'link', label: 'Revit 링크', expandable: false },
];

function PlusMark({ minus }: { minus?: boolean }) {
  return (
    <svg viewBox="0 0 8 8" className="size-2 shrink-0" aria-hidden="true">
      <path d={minus ? 'M0 4h8' : 'M0 4h8M4 0v8'} stroke="#6d6d6d" strokeWidth="2" />
    </svg>
  );
}

function ProjectBrowser() {
  return (
    <aside className="flex w-[273px] shrink-0 flex-col border-l-2 border-[#bdbdbd] bg-[#f0f0f0] pr-[2px] text-[13px]">
      <div className="-mr-[2px] flex h-4 shrink-0 items-center justify-between bg-[#d9d9d9] pr-[3px] pl-[2px] leading-4 text-[#444]">
        <h2>프로젝트 탐색기 - 프로젝트1</h2>
        <button type="button" aria-label="탐색기 닫기"><CloseMark /></button>
      </div>
      <div className="flex h-[25px] shrink-0 bg-[#cbcbcb] pt-px pl-[2px]">
        {browserTabs.map((name, i) => (
          <button key={name} type="button" aria-label={name} className={clsx('flex w-6 items-center justify-center', i === 0 && 'bg-white')}>
            <Icon name={name} />
          </button>
        ))}
      </div>
      <div className="ml-[2px] flex-1 bg-white">
        <label className="mr-2 ml-[7px] mt-2 flex h-[25px] items-center border border-[#dedede] pl-2">
          <Icon name="search" className="mr-2 size-4" />
          <input type="search" aria-label="검색" placeholder="검색" className="min-w-0 flex-1 bg-transparent outline-none placeholder:text-[#9a948e]" />
        </label>
        <ul className="mt-2 leading-5 text-black">
          <li>
            <div className="flex h-5 items-center border border-[#dedede] bg-[#f0f0f0] pl-1">
              <PlusMark minus />
              <Icon name="view" className="mr-[5px] ml-2 size-4" />
              뷰 (전체)
            </div>
            <ul>
              {viewChildren.map((label, i) => (
                <li key={label} className="flex h-5 items-center pl-2">
                  <span className="flex h-full w-[13px] flex-col">
                    <span className="h-[10px] w-2 border-b border-l border-dashed border-[#b5b5b5]" />
                    <span className={clsx('h-[10px]', i < viewChildren.length - 1 && 'border-l border-dashed border-[#b5b5b5]')} />
                  </span>
                  <PlusMark />
                  <span className="ml-[9px]">{label}</span>
                </li>
              ))}
            </ul>
          </li>
          {browserRoots.map((item) => (
            <li key={item.label} className="flex h-5 items-center pl-[5px]">
              <span className="mr-2 flex w-2">{item.expandable && <PlusMark />}</span>
              <Icon name={item.icon} className="mr-[5px] size-4" />
              {item.label}
            </li>
          ))}
        </ul>
      </div>
      <div className="h-[2px]" />
    </aside>
  );
}

const selectionToggles = ['pickLink', 'pickUnderlay', 'pickPin', 'pickFace', 'pickDrag', 'progress'];

function StatusBar() {
  return (
    <footer className="flex h-6 shrink-0 items-center bg-[#f5f5f5] pl-[2px] text-[13px] text-[#3c3c3c]">
      <p className="w-[731px] whitespace-nowrap">
        선택하려면 항목을 클릭하고, 다른 항목을 선택하려면 Tab 키, 추가하려면 Ctrl 키, 선택 취소하려면 Shift 키를 누르십시오.
      </p>
      <button type="button" aria-label="작업세트" className="mr-3 flex w-[227px] items-center justify-between">
        <Icon name="worksets" />
        <Chevron className="size-2 opacity-70" />
      </button>
      <span className="flex w-[52px] items-center gap-[2px] text-[#999]">
        <Icon name="editable" />
        :0
      </span>
      <button type="button" aria-label="설계 옵션" className="mr-[10px]"><Icon name="list" /></button>
      <button type="button" aria-label="옵션에 추가" className="mr-[11px]"><Icon name="listOut" /></button>
      <button type="button" className="flex w-[199px] items-center justify-between text-[#a8a8a8]">
        주모델
        <Chevron className="size-2 opacity-70" />
      </button>
      <div className="ml-auto flex items-center gap-[10px] pr-[92px]">
        {selectionToggles.map((name) => (
          <button key={name} type="button" aria-label={name}><Icon name={name} /></button>
        ))}
        <button type="button" className="flex items-center"><Icon name="filter" />:0</button>
      </div>
    </footer>
  );
}

function App() {
  return (
    <div className="flex h-screen flex-col overflow-hidden border-l-3 border-[#a9adb8] bg-[#f5f5f5] font-['Noto_Sans_CJK_KR',sans-serif]">
      <TitleBar />
      <RibbonTabs />
      <Ribbon />
      <div className="h-[26px] shrink-0" />
      <div className="flex min-h-0 flex-1 border-t-2 border-[#bdbdbd]">
        <PropertiesPanel />
        <DrawingArea />
        <ProjectBrowser />
      </div>
      <StatusBar />
    </div>
  );
}

export default App;
